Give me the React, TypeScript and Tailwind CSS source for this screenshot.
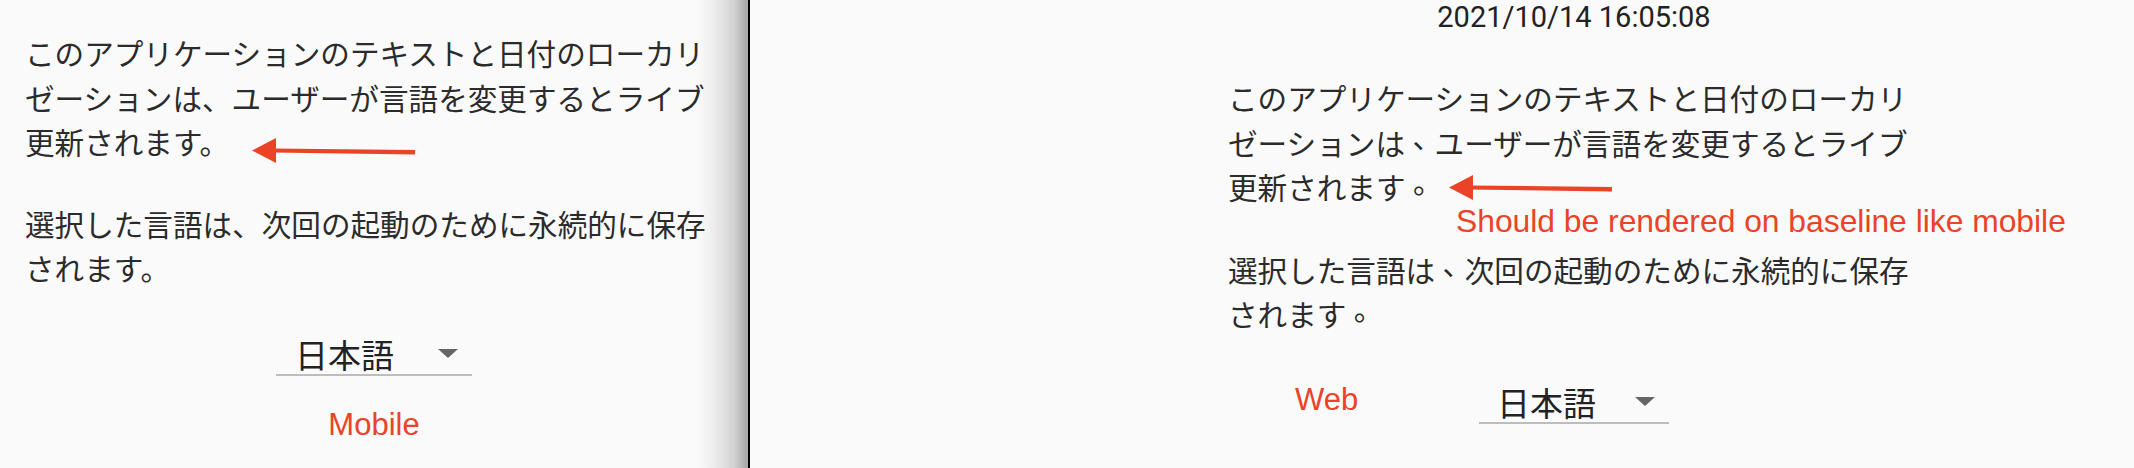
import React from "react";

const RED = "#ea4328";

// web rendering: 、 and 。 sit in the middle of the em box instead of on the baseline
function CenteredPunct({ text }: { text: string }) {
  return (
    <>
      {text.split(/([、。])/).map((s, i) =>
        s === "、" || s === "。" ? (
          <span
            key={i}
            className="inline-block w-[1em] text-center leading-none [font-feature-settings:'halt'] [vertical-align:0.22em]"
          >
            {s}
          </span>
        ) : (
          <React.Fragment key={i}>{s}</React.Fragment>
        )
      )}
    </>
  );
}

function Arrow() {
  return (
    <svg width="164" height="26" viewBox="0 0 164 26">
      <polygon points="0,12.5 24,0 24,25" fill={RED} />
      <polygon points="20,10.5 163,12 163,16.5 20,14.5" fill={RED} />
    </svg>
  );
}

function Caret() {
  return (
    <svg width="20" height="9" viewBox="0 0 20 9">
      <polygon points="0,0 20,0 10,9" fill="#666666" />
    </svg>
  );
}

function LangSelect({ width, pl }: { width: string; pl: string }) {
  return (
    <div
      className={`flex items-center justify-between ${width} ${pl} pr-[14px] border-b-2 border-[#bdbdbd] text-[33px] leading-[40px] text-[#222222] font-['Noto_Sans_CJK_JP',sans-serif]`}
    >
      <span>日本語</span>
      <Caret />
    </div>
  );
}

export default function App() {
  return (
    <div className="flex w-full h-[468px] overflow-hidden bg-[#fafafa] text-[#2b2b2b]">
      {/* Mobile */}
      <div className="relative w-[750px] shrink-0 border-r-2 border-black bg-[linear-gradient(to_right,#fafafa_698px,#ededed_714px,#d2d2d2_734px,#a6a6a6_748px)]">
        <div className="ml-[25px] pt-[31px] text-[29.6px] leading-[44.5px] font-['Noto_Sans_CJK_JP',sans-serif] whitespace-nowrap">
          <p>
            このアプリケーションのテキストと日付のローカリ
            <br />
            ゼーションは、ユーザーが言語を変更するとライブ
            <br />
            更新されます。
          </p>
          <p className="mt-[37px]">
            選択した言語は、次回の起動のために永続的に保存
            <br />
            されます。
          </p>
        </div>
        <div className="absolute left-[252px] top-[138px]">
          <Arrow />
        </div>
        <div className="flex flex-col items-center mt-[43px]">
          <LangSelect width="w-[196px]" pl="pl-[19px]" />
          <div className="mt-[31px] text-[31px] leading-[36px] font-['Liberation_Sans',Arial,sans-serif]" style={{ color: RED }}>
            Mobile
          </div>
        </div>
      </div>

      {/* Web */}
      <div className="flex-1">
        <div className="relative w-[692px] ml-[478px]">
          <div className="text-center text-[29px] leading-[34px] text-[#222222] font-['Roboto',sans-serif]">
            2021/10/14 16:05:08
          </div>
          <div className="mt-[42px] text-[29.6px] leading-[44.5px] font-['Noto_Sans_CJK_JP',sans-serif] whitespace-nowrap">
            <p>
              <CenteredPunct text="このアプリケーションのテキストと日付のローカリ" />
              <br />
              <CenteredPunct text="ゼーションは、ユーザーが言語を変更するとライブ" />
              <br />
              <CenteredPunct text="更新されます。" />
            </p>
            <p className="mt-[38px]">
              <CenteredPunct text="選択した言語は、次回の起動のために永続的に保存" />
              <br />
              <CenteredPunct text="されます。" />
            </p>
          </div>
          <div className="absolute left-[221px] top-[175px]">
            <Arrow />
          </div>
          <div
            className="absolute left-[228px] top-[203px] whitespace-nowrap text-[31.8px] leading-[36px] font-['Liberation_Sans',Arial,sans-serif]"
            style={{ color: RED }}
          >
            Should be rendered on baseline like mobile
          </div>
          <div className="relative flex justify-center mt-[45px]">
            <div className="relative">
              <div
                className="absolute left-[-184px] top-0 text-[31px] leading-[36px] font-['Liberation_Sans',Arial,sans-serif]"
                style={{ color: RED }}
              >
                Web
              </div>
              <LangSelect width="w-[190px]" pl="pl-[18px]" />
            </div>
          </div>
        </div>
      </div>
    </div>
  );
}
